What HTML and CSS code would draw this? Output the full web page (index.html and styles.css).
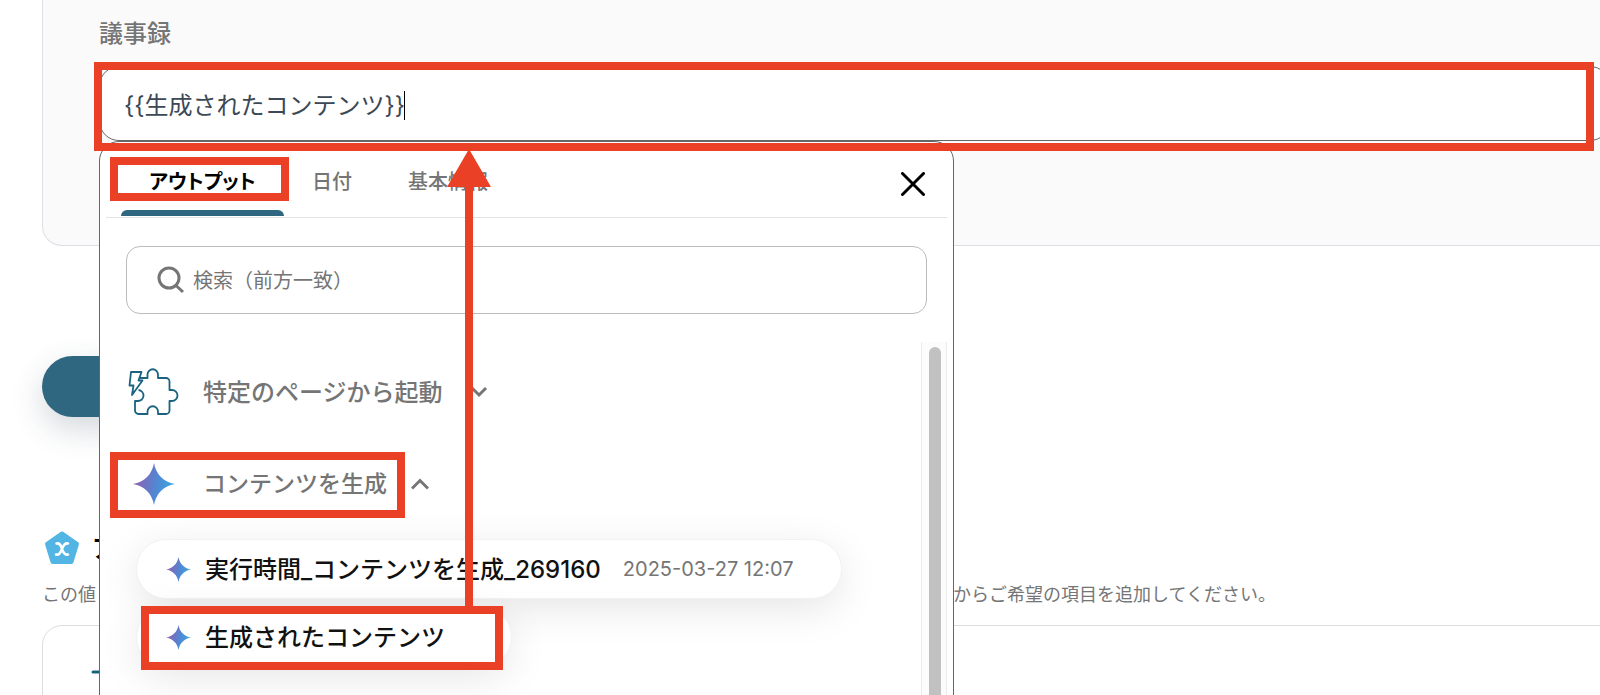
FILE: index.html
```html
<!DOCTYPE html>
<html lang="ja">
<head>
  <meta charset="UTF-8">
  <title>議事録</title>
  <link rel="stylesheet" href="styles.css">
</head>
<body>

  <!-- shared gradient and star shape -->
  <svg class="defs" aria-hidden="true">
    <defs>
      <linearGradient id="starFill" x1="0" y1="0.4" x2="1" y2="0.6">
        <stop offset="0.1" stop-color="#8a63b4"></stop>
        <stop offset="0.55" stop-color="#5187d3"></stop>
        <stop offset="0.9" stop-color="#3fa3e0"></stop>
      </linearGradient>
      <symbol id="star" viewBox="0 0 40 40">
        <path fill="url(#starFill)" d="M20 0C22 11 29 18 40 20C29 22 22 29 20 40C18 29 11 22 0 20C11 18 18 11 20 0Z"></path>
      </symbol>
    </defs>
  </svg>

  <main class="page">
    <section class="card form-card">
      <label class="field-label" for="minutes">議事録</label>
      <div class="field">
        <input class="field-input" id="minutes" type="text" value="{{生成されたコンテンツ}}">
        <span class="caret"></span>

        <div class="panel">
          <div class="tabs">
            <button class="tab active" type="button">アウトプット</button>
            <button class="tab" type="button">日付</button>
            <button class="tab" type="button">基本情報</button>
            <button class="close" type="button" aria-label="閉じる">
              <svg width="24" height="24" viewBox="0 0 24 24"><path d="M1.5 1.5L22.5 22.5M22.5 1.5L1.5 22.5" fill="none" stroke="#000" stroke-width="3" stroke-linecap="round"></path></svg>
            </button>
          </div>

          <label class="search">
            <svg width="28" height="28" viewBox="0 0 28 28"><path d="M12 2a10 10 0 1 0 0 20a10 10 0 1 0 0-20M19 19.500L26 26" fill="none" stroke="#757575" stroke-width="3"></path></svg>
            <input type="text" placeholder="検索（前方一致）">
          </label>

          <div class="list-wrap">
            <div class="list">
              <button class="group" type="button">
                <svg class="group-icon" width="52" height="48" viewBox="0 0 52 48" fill="none" stroke="#1b6280" stroke-width="1.800" stroke-linejoin="round">
                  <path d="M12 10H19.500V6.500a5 5 0 0 1 10.500 0V10H38a3.500 3.500 0 0 1 3.500 3.500V22H44a5 5 0 0 1 0 11H41.500V42.500a3.500 3.500 0 0 1-3.500 3.500H30V43.500a5 5 0 0 0-10.500 0V46H10.500a3.500 3.500 0 0 1-3.500-3.500V33H9.500a5.500 5.500 0 0 0 1-11"></path>
                  <path d="M3 4H13.500L10.500 12.500H14.500L4 27L5.500 17.500H1.500Z"></path>
                </svg>
                <span>特定のページから起動</span>
                <svg class="down" width="18" height="12" viewBox="0 0 18 12"><path d="M2 2L9 9L16 2" fill="none" stroke="#757575" stroke-width="3"></path></svg>
              </button>
              <button class="group open" type="button">
                <svg class="group-icon" width="52" height="42"><use href="#star"></use></svg>
                <span>コンテンツを生成</span>
                <svg class="up" width="18" height="12" viewBox="0 0 18 12"><path d="M1 10.500L9 2.500L17 10.500" fill="none" stroke="#757575" stroke-width="3"></path></svg>
              </button>
              <div class="items">
                <button class="item" type="button">
                  <svg width="25" height="25"><use href="#star"></use></svg>
                  <span>実行時間_コンテンツを生成_269160</span>
                  <time>2025-03-27 12:07</time>
                </button>
                <button class="item short" type="button">
                  <svg width="25" height="25"><use href="#star"></use></svg>
                  <span>生成されたコンテンツ</span>
                </button>
              </div>
            </div>
            <div class="track"><div class="thumb"></div></div>
          </div>
        </div>
      </div>
    </section>

    <button class="primary" type="button" aria-label="実行"></button>

    <h2 class="output-title">
      <svg width="36" height="36" viewBox="0 0 36 36">
        <path d="M18 3.500L33 14L27.500 32H8.500L3 14Z" fill="#52b5e4" stroke="#52b5e4" stroke-width="4" stroke-linejoin="round"></path>
        <path d="M12.500 13.500C17 12.500 17 17 18 19S20 25.500 24 24.500M24 13.500C20 12.500 19 17 18 19S16 25.500 12 24.500" fill="none" stroke="#fff" stroke-width="2.500" stroke-linecap="round"></path>
      </svg>
      <span>アウトプット</span>
    </h2>
    <p class="output-note"><span class="note-start">この値</span><span>からご希望の項目を追加してください。</span></p>
    <section class="card output-card">
      <svg width="24" height="24" viewBox="0 0 24 24"><path d="M2 12H22" stroke="#1b6280" stroke-width="3" stroke-linecap="round"></path></svg>
    </section>
  </main>

  <!-- callouts -->
  <div class="mark mark-field"></div>
  <div class="mark mark-tab"></div>
  <div class="mark mark-group"></div>
  <div class="mark mark-item"></div>
  <svg class="arrow" width="44" height="458" viewBox="0 0 44 458">
    <path d="M22 0L44 38H26V458H18V38H0Z" fill="#ea4025"></path>
  </svg>

</body>
</html>
```
FILE: styles.css
```css
* {
  box-sizing: border-box;
}

body {
  position: relative;
  height: 100vh;
  margin: 0;
  overflow: hidden;
  background: #fff;
  color: #757575;
  font-family: Inter, "Noto Sans CJK JP", sans-serif;
  font-size: 24px;
}

button,
input {
  padding: 0;
  border: none;
  background: none;
  color: inherit;
  font: inherit;
  outline: none;
}

button {
  cursor: pointer;
}

svg {
  display: block;
  flex: none;
}

.defs {
  position: absolute;
  width: 0;
  height: 0;
}

.page {
  height: 100%;
  padding-left: 42px;
  overflow: hidden;
}

.card {
  margin-right: -60px;
  border: 1px solid #dcdfe4;
}

.form-card {
  height: 246px;
  padding: 16px 49px 0 56px;
  border-top: none;
  border-radius: 0 0 20px 20px;
  background: #fafafa;
}

.field-label {
  display: block;
  line-height: 36px;
  font-weight: 500;
}

.field {
  position: relative;
  margin-top: 14px;
}

.field-input {
  display: block;
  width: 100%;
  height: 75px;
  padding: 0 24px;
  border: 1px solid #666;
  border-radius: 20px;
  background: #fff;
  color: #3c4855;
}

.caret {
  position: absolute;
  top: 25px;
  left: 305px;
  width: 1px;
  height: 29px;
  background: #000;
}

/* dropdown */
.panel {
  position: absolute;
  z-index: 1;
  top: 75px;
  left: 0;
  display: flex;
  flex-direction: column;
  width: 855px;
  height: 620px;
  padding: 0 6px;
  border: 1px solid #666;
  border-radius: 20px;
  background: #fff;
}

.tabs {
  display: flex;
  flex: none;
  height: 76px;
  padding: 0 22px 0 15px;
  border-bottom: 1px solid #e2e2e2;
}

.tab {
  position: relative;
  height: 74px;
  padding: 2px 28px 0;
  font-size: 20px;
  font-weight: 500;
}

.tab.active {
  width: 163px;
  padding: 2px 0 0;
  color: #000;
  font-weight: 700;
  font-feature-settings: "palt";
}

/* bar under the active tab, rounded on top only */
.tab.active::after {
  content: "";
  position: absolute;
  right: 0;
  bottom: 0;
  left: 0;
  height: 6px;
  border-radius: 6px 6px 0 0;
  background: #2f6780;
}

.close {
  margin-left: auto;
  padding-top: 8px;
}

.search {
  display: flex;
  flex: none;
  align-items: center;
  gap: 8px;
  height: 68px;
  margin: 28px 20px;
  padding-left: 30px;
  border: 1px solid #bbb;
  border-radius: 14px;
}

.search input {
  flex: 1;
  padding-top: 2px;
  font-size: 20px;
}

.search input::placeholder {
  color: #757575;
}

.list-wrap {
  display: flex;
  flex: 1;
  min-height: 0;
}

.list {
  flex: 1;
  padding: 4px 0 0 22px;
}

.group {
  display: flex;
  align-items: center;
  height: 92px;
  font-weight: 500;
}

.group.open {
  font-size: 23px;
}

.group span,
.item span,
.output-title span {
  padding-bottom: 4px;
}

.group-icon {
  margin-right: 23px;
}

.down {
  margin-left: 27px;
}

.up {
  margin-left: 24px;
}

.items {
  display: flex;
  flex-direction: column;
  align-items: flex-start;
  gap: 8px;
  padding: 9px 0 0 8px;
}

.item {
  display: flex;
  align-items: center;
  height: 60px;
  padding: 0 48px 0 29px;
  border: 1px solid #f2f2f2;
  border-radius: 30px;
  background: #fff;
  box-shadow: 0 10px 40px rgba(0, 0, 0, 0.1);
  color: #111;
  font-weight: 500;
}

.item span {
  margin-left: 14px;
}

.item time {
  margin-left: 22px;
  color: #757575;
  font-size: 20px;
  font-weight: 400;
}

.item.short {
  padding-right: 66px;
}

.track {
  width: 26px;
  padding: 5px 5px 0 7px;
  border: 1px solid #ebebeb;
  border-top: none;
  background: #fcfcfc;
}

.thumb {
  height: 100%;
  border-radius: 7px;
  background: #c1c1c1;
}

/* page behind the dropdown */
.primary {
  display: block;
  width: 320px;
  height: 61px;
  margin-top: 110px;
  border-radius: 31px;
  background: #2f6780;
  box-shadow: 0 12px 32px rgba(40, 60, 80, 0.2);
}

.output-title {
  display: flex;
  align-items: center;
  gap: 12px;
  height: 36px;
  margin: 113px 0 0 2px;
  color: #000;
  font-size: 24px;
  font-weight: 700;
}

.output-note {
  display: flex;
  height: 28px;
  margin: 15px 0 16px;
  font-size: 18px;
  line-height: 28px;
  white-space: nowrap;
}

.note-start {
  width: 911px;
}

.output-card {
  height: 200px;
  padding: 34px 48px;
  border-color: #ddd;
  border-radius: 20px;
}

/* callouts */
.mark {
  position: absolute;
  z-index: 2;
  border: 8px solid #ea4025;
  pointer-events: none;
}

.mark-field {
  top: 62px;
  right: 6px;
  left: 94px;
  height: 89px;
}

.mark-tab {
  top: 157px;
  left: 110px;
  width: 179px;
  height: 44px;
}

.mark-group {
  top: 452px;
  left: 110px;
  width: 295px;
  height: 66px;
}

.mark-item {
  top: 606px;
  left: 141px;
  width: 362px;
  height: 64px;
}

.arrow {
  position: absolute;
  z-index: 2;
  top: 149px;
  left: 447px;
  pointer-events: none;
}
```
